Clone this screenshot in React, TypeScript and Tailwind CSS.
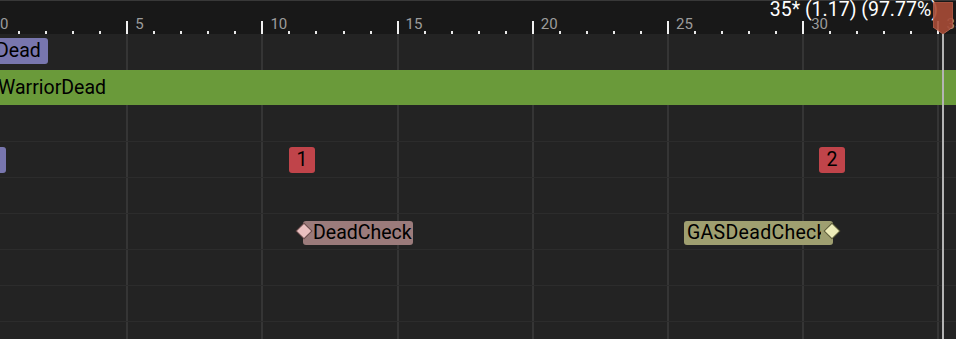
import React from "react";

const fx = (f: number) => -8 + 27.04 * f;

const majors = [0, 5, 10, 15, 20, 25, 30, 35];
const minors = Array.from({ length: 36 }, (_, i) => i).filter((i) => i % 5 !== 0);

function Ruler() {
  return (
    <div className="relative h-[34px] shrink-0 border-t border-[#383838] bg-[#181818]">
      {majors.map((m) => (
        <React.Fragment key={m}>
          <div
            className="absolute top-[20px] h-[13px] w-[2px] bg-[#f0f0f0]"
            style={{ left: fx(m) - 1 }}
          />
          <div
            className="absolute top-[14px] text-[15px] leading-[18px] text-[#9c9c9c]"
            style={{ left: fx(m) + 8 }}
          >
            {m}
          </div>
        </React.Fragment>
      ))}
      {minors.map((m) => (
        <div
          key={m}
          className="absolute top-[30px] h-[3px] w-[2px] bg-[#e8e8e8]"
          style={{ left: fx(m) - 1 }}
        />
      ))}
      <div className="absolute right-[18px] top-[-3px] text-[19.5px] leading-[24px] text-white">
        35* (1.17) (97.77%)
      </div>
      <svg
        className="absolute left-[933px] top-[1px] opacity-90"
        width="20"
        height="33"
        viewBox="0 0 20 33"
      >
        <path
          d="M2 0 H18 Q20 0 20 2 V25 L10 32 L0 25 V2 Q0 0 2 0 Z"
          fill="#a84b36"
          stroke="#c26a55"
          strokeWidth="1"
        />
      </svg>
    </div>
  );
}

function Diamond({ left, color, border }: { left: number; color: string; border: string }) {
  return (
    <div
      className="absolute top-[12px] h-[10px] w-[10px] rotate-45"
      style={{ left: left - 5, backgroundColor: color, boxShadow: `0 0 0 1px ${border}` }}
    />
  );
}

function Tracks() {
  const rowLine = "border-t border-[#2c2c2c]";
  return (
    <div className="relative flex-1 bg-[#232323]">
      {/* grid lines */}
      <div className="absolute inset-0">
        {majors.slice(1).map((m) => (
          <div
            key={m}
            className="absolute top-0 bottom-0 w-[2px] bg-[#353535]"
            style={{ left: fx(m) - 1 }}
          />
        ))}
      </div>
      <div className="relative flex flex-col text-[19.5px] text-black">
        <div className="relative h-[36px]">
          <div className="absolute left-[-8px] top-[4px] flex h-[26px] w-[56px] items-center rounded-[3px] bg-[#7876ae] pl-[4px]">
            Dead
          </div>
        </div>
        <div className="flex h-[35px] w-full items-center bg-[#6a9a3a]">
          <span className="ml-[-2px]">WarriorDead</span>
        </div>
        <div className="h-[36px]" />
        <div className={`relative h-[36px] ${rowLine}`}>
          <div className="absolute left-[-6px] top-[5px] h-[26px] w-[12px] rounded-[3px] bg-[#7876ae]" />
          <div className="absolute left-[289px] top-[5px] flex h-[26px] w-[26px] items-center justify-center rounded-[3px] bg-[#c0444a]">
            1
          </div>
          <div className="absolute left-[819px] top-[5px] flex h-[26px] w-[26px] items-center justify-center rounded-[3px] bg-[#c0444a]">
            2
          </div>
        </div>
        <div className={`h-[36px] ${rowLine}`} />
        <div className={`relative h-[36px] ${rowLine}`}>
          <div className="absolute left-[303px] top-[7px] flex h-[24px] w-[110px] items-center overflow-hidden whitespace-nowrap rounded-[3px] bg-[#9b7b7b] pl-[10px]">
            DeadCheck
          </div>
          <Diamond left={304} color="#eac0c0" border="#6a4c4c" />
          <div className="absolute left-[684px] top-[7px] flex h-[24px] w-[149px] items-center rounded-[3px] bg-[#9f9f70] pl-[3px]">
            <span className="w-[134px] overflow-hidden whitespace-nowrap tracking-[0.3px]">
              GASDeadCheck
            </span>
          </div>
          <Diamond left={832} color="#ecebb8" border="#5d5d3a" />
        </div>
        <div className={`h-[36px] ${rowLine}`} />
        <div className={`h-[36px] ${rowLine}`} />
        <div className={`h-[36px] ${rowLine}`} />
      </div>
      {/* playhead */}
      <div className="absolute top-0 bottom-0 left-[942px] w-[2px] bg-[#b4b4b4]" />
    </div>
  );
}

export default function App() {
  return (
    <div
      className="flex h-[339px] w-[956px] flex-col overflow-hidden bg-[#232323]"
      style={{ fontFamily: "Roboto, 'Liberation Sans', sans-serif" }}
    >
      <Ruler />
      <Tracks />
    </div>
  );
}
